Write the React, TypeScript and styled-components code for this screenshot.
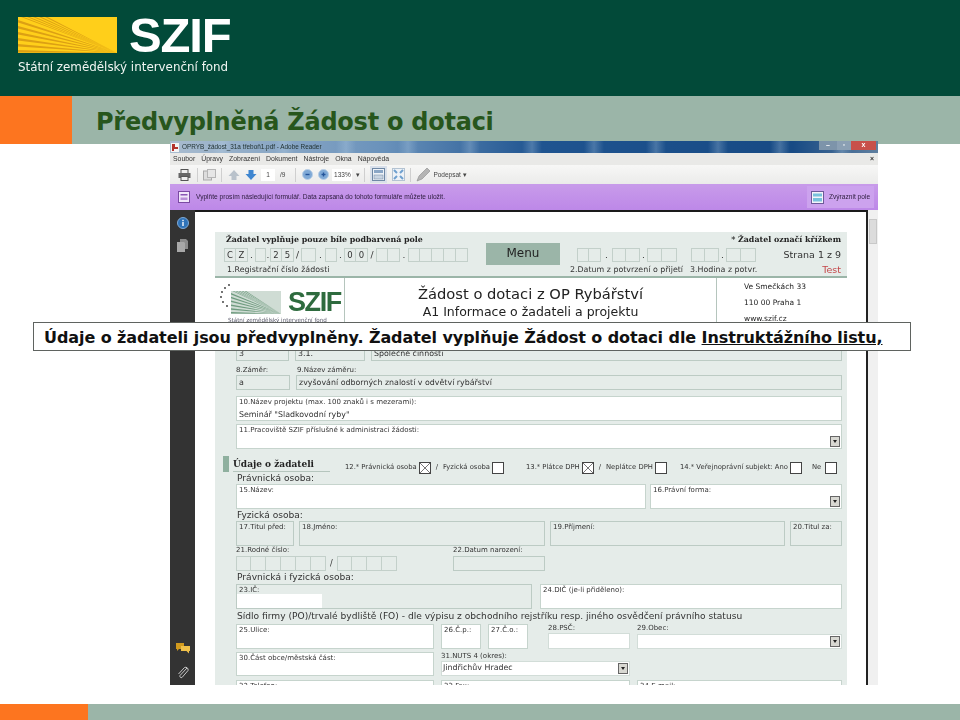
import React from "react";
import styled, { createGlobalStyle } from "styled-components";

const GlobalStyle = createGlobalStyle`
  html, body { margin: 0; padding: 0; background: #fff; }
  body { font-family: "DejaVu Sans", sans-serif; }
`;

const Page = styled.div`
  position: relative;
  width: 960px;
  height: 720px;
  display: flex;
  flex-direction: column;
  overflow: hidden;
  background: #fff;
`;

const Header = styled.header`
  height: 96px;
  flex: none;
  background: #024a39;
  padding: 17px 0 0 18px;
  box-sizing: border-box;
`;

const BrandRow = styled.div`
  display: flex;
  align-items: flex-start;
  gap: 12px;
  height: 36px;
`;

const BrandName = styled.div`
  font: 700 49px/36px "Liberation Sans", sans-serif;
  letter-spacing: -1.2px;
  color: #fff;
  height: 36px;
  overflow: visible;
`;

const BrandSub = styled.div`
  margin-top: 6px;
  font: 400 11.9px/16px "DejaVu Sans", sans-serif;
  color: #f0f5f2;
  filter: blur(0.3px);
`;

const TitleBand = styled.div`
  height: 48px;
  flex: none;
  display: flex;
  background: #9bb5a8;
`;

const OrangeBlock = styled.div<{ $w: number }>`
  width: ${(p) => p.$w}px;
  background: #fd751f;
`;

const Title = styled.h1`
  margin: 0 0 0 24px;
  font: 700 24px/53px "DejaVu Sans", sans-serif;
  letter-spacing: -0.25px;
  color: #27561c;
  white-space: nowrap;
`;

const Stage = styled.main`
  flex: 1;
  padding-left: 170px;
`;

const Window = styled.div`
  width: 708px;
  height: 544px;
  margin-top: -3px;
  display: flex;
  flex-direction: column;
  overflow: hidden;
  background: #f1f1f0;
  filter: blur(0.35px);
`;

const WinTitle = styled.div`
  height: 12px;
  flex: none;
  display: flex;
  align-items: center;
  background:
    repeating-linear-gradient(90deg, transparent 0 42px, rgba(190, 215, 235, 0.28) 52px, transparent 62px),
    linear-gradient(90deg, #a9bccf, #6a92bb 30%, #1f5490 52%, #174a84 88%, #5f7f9f);
  font: 400 6.4px/12px "Liberation Sans", sans-serif;
  color: #233;
`;

const WinText = styled.span`
  margin-left: 3px;
  white-space: nowrap;
`;

const WinButtons = styled.div`
  margin-left: auto;
  display: flex;
  height: 9px;
  align-self: flex-start;
  margin-right: 2px;
`;

const WinBtn = styled.div<{ $w: number; $c: string }>`
  width: ${(p) => p.$w}px;
  background: ${(p) => p.$c};
  color: #fff;
  font: 700 7px/8px "Liberation Sans", sans-serif;
  text-align: center;
`;

const MenuBar = styled.div`
  height: 12px;
  flex: none;
  display: flex;
  align-items: center;
  gap: 6px;
  padding: 0 4px 0 3px;
  background: #e9e9e7;
  font: 400 6.9px/12px "Liberation Sans", sans-serif;
  color: #333;
`;

const MenuClose = styled.span`
  margin-left: auto;
  font-weight: 700;
`;

const ToolBar = styled.div`
  height: 19px;
  flex: none;
  display: flex;
  align-items: center;
  padding-left: 8px;
  background: linear-gradient(#f7f7f6, #ebebea);
  font: 400 6.5px/12px "Liberation Sans", sans-serif;
  color: #444;
`;

const ToolSlot = styled.div<{ $ml?: number }>`
  margin-left: ${(p) => p.$ml ?? 0}px;
  display: flex;
  align-items: center;
`;

const ToolInput = styled.div<{ $w: number }>`
  width: ${(p) => p.$w}px;
  height: 12px;
  background: #fff;
  text-align: center;
  font-size: 6.5px;
`;

const ToolSep = styled.div<{ $ml: number }>`
  width: 1px;
  height: 14px;
  margin-left: ${(p) => p.$ml}px;
  background: #cfcfcf;
`;

const Highlight = styled.div`
  margin-left: 5px;
  padding: 2px;
  background: #d9e0ea;
  display: flex;
`;

const NoticeBar = styled.div`
  height: 26px;
  flex: none;
  display: flex;
  align-items: center;
  padding: 0 4px 0 8px;
  box-sizing: border-box;
  background: linear-gradient(#c89bea, #bd88e8);
  font: 400 6.6px/12px "Liberation Sans", sans-serif;
  color: #2c1c3d;
`;

const NoticeText = styled.span`
  margin-left: 6px;
`;

const HighlightBtn = styled.div`
  margin-left: auto;
  width: 67px;
  height: 22px;
  box-sizing: border-box;
  padding-left: 4px;
  display: flex;
  align-items: center;
  gap: 5px;
  background: #cca2ee;
  white-space: nowrap;
`;

const Body = styled.div`
  flex: 1;
  display: flex;
  min-height: 0;
`;

const SidePanel = styled.aside`
  width: 25px;
  flex: none;
  display: flex;
  flex-direction: column;
  align-items: center;
  box-sizing: border-box;
  padding: 7px 0 6px;
  background: #333;
`;

const SideGap = styled.div<{ $h: number }>`
  height: ${(p) => p.$h}px;
  flex: none;
`;

const SideSpacer = styled.div`
  flex: 1;
`;

const PageView = styled.div`
  width: 673px;
  flex: none;
  box-sizing: border-box;
  padding: 20px 0 0 20px;
  background: #fff;
  border-top: 2px solid #1a1a1a;
  border-right: 2px solid #222;
  overflow: hidden;
`;

const ScrollBar = styled.div`
  flex: 1;
  padding-top: 9px;
  display: flex;
  flex-direction: column;
  align-items: center;
  background: #f0f0f0;
`;

const ScrollThumb = styled.div`
  width: 8px;
  height: 25px;
  background: #dcdcdc;
  border: 1px solid #c8c8c8;
  box-sizing: border-box;
`;

const Form = styled.div`
  width: 632px;
  display: flex;
  flex-direction: column;
  background: #e5ece9;
  color: #333;
`;

const FormTop = styled.div`
  height: 46px;
  flex: none;
  box-sizing: border-box;
  padding-left: 9px;
  padding-right: 6px;
  display: grid;
  grid-template-columns: 262px 74px 1fr;
  border-bottom: 2px solid #9bb5a8;
`;

const TopStack = styled.div`
  display: flex;
  flex-direction: column;
  font: 400 7.9px/10px "DejaVu Sans", sans-serif;
`;

const TopRow = styled.div<{ $h: number; $pl?: number }>`
  height: ${(p) => p.$h}px;
  padding-left: ${(p) => p.$pl ?? 0}px;
  display: flex;
  align-items: center;
  white-space: nowrap;
`;

const StrongNote = styled.b<{ $right?: boolean }>`
  font: 700 7.9px/10px "DejaVu Serif", "DejaVu Sans", serif;
  color: #222;
  margin-left: ${(p) => (p.$right ? "auto" : "0")};
`;

const MenuButton = styled.div`
  height: 22px;
  margin-top: 11px;
  background: #9bb5a8;
  text-align: center;
  font: 400 12px/21px "DejaVu Sans", sans-serif;
  color: #222;
`;

const TopRight = styled(TopStack)`
  margin-left: 10px;
`;

const CellGroup = styled.div`
  display: flex;
`;

const Cell = styled.div<{ $w?: number; $h?: number }>`
  width: ${(p) => p.$w ?? 12}px;
  height: ${(p) => p.$h ?? 14}px;
  box-sizing: border-box;
  border: 1px solid #c3d0ca;
  text-align: center;
  font: 400 8.5px/12px "DejaVu Sans", sans-serif;
  & + & {
    border-left: 0;
  }
`;

const Dot = styled.span<{ $w?: number }>`
  width: ${(p) => p.$w ?? 8}px;
  text-align: center;
  font-size: 9px;
`;

const PageNo = styled.span`
  margin-left: auto;
  font-size: 9.5px;
`;

const TestNote = styled.span`
  margin-left: auto;
  font-size: 9.5px;
  color: #c4474a;
`;

const LogoRow = styled.div`
  height: 62px;
  flex: none;
  display: grid;
  grid-template-columns: 130px 1fr 131px;
  background: #fff;
`;

const LogoCell = styled.div`
  box-sizing: border-box;
  padding: 5px 0 0 5px;
  border-right: 1px solid #b5c5bd;
`;

const SmallLogo = styled.div`
  display: flex;
  align-items: flex-start;
`;

const SmallRays = styled.div`
  margin-top: 8px;
  display: flex;
`;

const SmallName = styled.div`
  margin: 8px 0 0 7px;
  font: 700 27px/23px "Liberation Sans", sans-serif;
  letter-spacing: -1.4px;
  color: #2e6b3e;
`;

const SmallSub = styled.div`
  margin: 2px 0 0 8px;
  font: 400 5.6px/8px "DejaVu Sans", sans-serif;
  color: #556;
  white-space: nowrap;
`;

const HeadCell = styled.div`
  display: flex;
  flex-direction: column;
  align-items: center;
  padding-top: 7px;
  color: #222;
`;

const HeadMain = styled.div`
  font: 400 14.7px/18px "DejaVu Sans", sans-serif;
`;

const HeadSub = styled.div`
  font: 400 12.5px/18px "DejaVu Sans", sans-serif;
`;

const AddressCell = styled.div`
  box-sizing: border-box;
  padding: 1px 0 0 27px;
  border-left: 1px solid #b5c5bd;
  font: 400 7.5px/16px "DejaVu Sans", sans-serif;
  color: #222;
`;

const FormBody = styled.div`
  display: flex;
  flex-direction: column;
  padding: 4px 5px 0 21px;
`;

const FieldRow = styled.div<{ $cols: string; $h: number; $gap?: number; $mt?: number; $end?: boolean }>`
  display: grid;
  grid-template-columns: ${(p) => p.$cols};
  column-gap: ${(p) => p.$gap ?? 6}px;
  height: ${(p) => p.$h}px;
  flex: none;
  margin-top: ${(p) => p.$mt ?? 0}px;
  align-items: ${(p) => (p.$end ? "end" : "stretch")};
`;

const Field = styled.div<{ $white?: boolean }>`
  position: relative;
  box-sizing: border-box;
  min-width: 0;
  padding: 1px 2px;
  border: 1px solid ${(p) => (p.$white ? "#c6d4cd" : "#bccbc4")};
  background: ${(p) => (p.$white ? "#fff" : "#e5ece9")};
  overflow: hidden;
`;

const BareField = styled.div<{ $ml?: number }>`
  position: relative;
  min-width: 0;
  display: flex;
  flex-direction: column;
  margin-left: ${(p) => p.$ml ?? 0}px;
`;

const Label = styled.div`
  font: 400 7px/9px "DejaVu Sans", sans-serif;
  color: #333;
  white-space: nowrap;
`;

const Value = styled.div<{ $pt?: number }>`
  padding-top: ${(p) => p.$pt ?? 0}px;
  font: 400 7.9px/11px "DejaVu Sans", sans-serif;
  color: #333;
  white-space: nowrap;
`;

const InnerInput = styled.div<{ $h: number }>`
  position: relative;
  height: ${(p) => p.$h}px;
  margin-top: auto;
  box-sizing: border-box;
  padding-left: 1px;
  border: 1px solid #d2ddd8;
  background: #fff;
`;

const WhitePatch = styled.div`
  position: absolute;
  left: 0;
  bottom: 0;
  width: 85px;
  height: 14px;
  background: #fff;
`;

const DropButton = styled.div`
  position: absolute;
  right: 1px;
  bottom: 1px;
  width: 10px;
  height: 11px;
  box-sizing: border-box;
  border: 1px solid #666;
  background: #d8d8d2;
  display: flex;
  align-items: center;
  justify-content: center;
  &::after {
    content: "";
    border-left: 2px solid transparent;
    border-right: 2px solid transparent;
    border-top: 3px solid #222;
  }
`;

const SectionRow = styled.div`
  height: 24px;
  flex: none;
  margin-left: -13px;
  display: flex;
  align-items: flex-start;
  padding-top: 7px;
  box-sizing: border-box;
`;

const Marker = styled.div`
  width: 6px;
  height: 16px;
  background: #8fb09f;
  flex: none;
`;

const SectionHead = styled.div`
  width: 97px;
  margin-left: 4px;
  height: 15px;
  border-bottom: 1px solid #b5c5bd;
  font: 700 9px/17px "DejaVu Serif", "DejaVu Sans", serif;
  color: #222;
  white-space: nowrap;
`;

const Checks = styled.div`
  margin: 5px 0 0 15px;
  flex: 1;
  display: grid;
  grid-template-columns: 181px 154px 1fr;
`;

const CheckGroup = styled.div`
  display: flex;
  align-items: center;
  height: 13px;
  font: 400 6.8px/13px "DejaVu Sans", sans-serif;
  white-space: nowrap;
`;

const CheckBox = styled.div<{ $ml: number }>`
  width: 12px;
  height: 12px;
  flex: none;
  margin-left: ${(p) => p.$ml}px;
  box-sizing: border-box;
  border: 1px solid #444;
  background: #fff;
  display: flex;
`;

const NoLabel = styled.span`
  margin-left: 10px;
`;

const Slash = styled.span`
  margin: 0 5px 0 5px;
`;

const GroupTitle = styled.div<{ $h: number }>`
  height: ${(p) => p.$h}px;
  flex: none;
  padding-left: 1px;
  font: 400 9.1px/${(p) => p.$h}px "DejaVu Sans", sans-serif;
  color: #333;
  white-space: nowrap;
`;

const BirthRow = styled.div`
  display: flex;
  align-items: center;
  gap: 4px;
  font: 400 8px/12px "DejaVu Sans", sans-serif;
`;

const Caption = styled.div`
  position: absolute;
  left: 33px;
  top: 322px;
  width: 878px;
  height: 29px;
  box-sizing: border-box;
  padding-left: 10px;
  background: #fff;
  border: 1px solid #5f6360;
  font: 700 16px/30px "DejaVu Sans", sans-serif;
  letter-spacing: -0.08px;
  color: #111;
  white-space: nowrap;
`;

const CaptionLink = styled.span`
  text-decoration: underline;
`;

const Footer = styled.footer`
  height: 16px;
  flex: none;
  display: flex;
  background: #9bb5a8;
`;

const topRays = [3, 9, 15, 21, 27];
const leftRays = [3, 9, 15, 21, 27, 33];
const stars = [
  [9, 2],
  [5, 5],
  [2, 9],
  [1, 14],
  [3, 19],
  [7, 23],
];

const FieldRays = ({ w, h, ray, bg }: { w: number; h: number; ray: string; bg: string }) => (
  <svg width={w} height={h} viewBox="0 0 99 36" preserveAspectRatio="none">
    <rect width="99" height="36" fill={bg} />
    {topRays.map((x) => (
      <polygon key={x} points={`99,36 ${x},0 ${x + 2.6},0`} fill={ray} />
    ))}
    {leftRays.map((y) => (
      <polygon key={y} points={`99,36 0,${y} 0,${y + 2.4}`} fill={ray} />
    ))}
  </svg>
);

const Stars = () => (
  <svg width="11" height="26" viewBox="0 0 11 26">
    {stars.map(([cx, cy]) => (
      <circle key={cy} cx={cx} cy={cy} r="0.9" fill="#333" />
    ))}
  </svg>
);

const PrinterIcon = () => (
  <svg width="13" height="12" viewBox="0 0 13 12">
    <rect x="3" y="0.5" width="7" height="4" fill="#eee" stroke="#555" />
    <rect x="0.5" y="4" width="12" height="5" fill="#666" />
    <rect x="3" y="7.5" width="7" height="4" fill="#eee" stroke="#555" />
  </svg>
);

const MailIcon = () => (
  <svg width="13" height="12" viewBox="0 0 13 12">
    <rect x="0.5" y="2" width="8" height="9" fill="#ddd" stroke="#aaa" />
    <rect x="4.5" y="0.5" width="8" height="8" fill="#e6e6e6" stroke="#b5b5b5" />
  </svg>
);

const ArrowIcon = ({ up, c }: { up?: boolean; c: string }) => (
  <svg width="12" height="12" viewBox="0 0 12 12">
    <path d={up ? "M6 1 L11.5 7 H8.5 V11 H3.5 V7 H0.5 Z" : "M6 11 L11.5 5 H8.5 V1 H3.5 V5 H0.5 Z"} fill={c} />
  </svg>
);

const ZoomIcon = ({ plus }: { plus?: boolean }) => (
  <svg width="11" height="11" viewBox="0 0 11 11">
    <circle cx="5.5" cy="5.5" r="5" fill="#7fa9d6" stroke="#b9cfe6" />
    <rect x="3.5" y="4.8" width="4" height="1.4" fill="#24549a" />
    {plus && <rect x="4.8" y="3.5" width="1.4" height="4" fill="#24549a" />}
  </svg>
);

const SaveIcon = () => (
  <svg width="13" height="13" viewBox="0 0 13 13">
    <rect x="0.5" y="0.5" width="12" height="12" fill="#eef2f7" stroke="#6f88a5" />
    <rect x="2" y="2" width="9" height="3" fill="#8aa6c6" />
    <rect x="2" y="7" width="9" height="4" fill="#c8d4e2" stroke="#7088a2" strokeWidth="0.5" />
  </svg>
);

const FitIcon = () => (
  <svg width="13" height="13" viewBox="0 0 13 13">
    <rect x="0.5" y="0.5" width="12" height="12" fill="#eef2f7" stroke="#b4c3d2" />
    <path d="M2 2 L5 5 M11 2 L8 5 M2 11 L5 8 M11 11 L8 8" stroke="#6fa0cf" strokeWidth="2" />
  </svg>
);

const PenIcon = () => (
  <svg width="15" height="15" viewBox="0 0 15 15">
    <path d="M1 14 L3 9 L11 1 L14 4 L6 12 Z" fill="#b4b4b4" stroke="#8a8a8a" strokeWidth="0.6" />
  </svg>
);

const FormIcon = () => (
  <svg width="12" height="12" viewBox="0 0 12 12">
    <rect x="0.5" y="0.5" width="11" height="11" fill="#f1e6fa" stroke="#7b4aa3" />
    <rect x="2.5" y="3" width="7" height="1.5" fill="#8a55b5" />
    <rect x="2.5" y="6.5" width="7" height="2.5" fill="#b98fd8" />
  </svg>
);

const HighlightIcon = () => (
  <svg width="13" height="13" viewBox="0 0 13 13">
    <rect x="0.5" y="0.5" width="12" height="12" fill="#f4f4fb" stroke="#6d5a99" />
    <rect x="2" y="2.5" width="9" height="3" fill="#78c2dc" />
    <rect x="2" y="7" width="9" height="3.5" fill="#78c2dc" />
  </svg>
);

const InfoIcon = () => (
  <svg width="12" height="12" viewBox="0 0 12 12">
    <circle cx="6" cy="6" r="5.5" fill="#2f73b8" stroke="#7fa9d6" />
    <rect x="5.2" y="5" width="1.6" height="4" fill="#dfe9f4" />
    <rect x="5.2" y="2.8" width="1.6" height="1.4" fill="#dfe9f4" />
  </svg>
);

const PagesIcon = () => (
  <svg width="11" height="13" viewBox="0 0 11 13">
    <path d="M3 0 H9 L11 2 V10 H3 Z" fill="#8c8c8c" />
    <path d="M0 3 H7 L8 4 V13 H0 Z" fill="#a8a8a8" />
  </svg>
);

const ChatIcon = () => (
  <svg width="14" height="11" viewBox="0 0 14 11">
    <path d="M0 0 H8 V6 H3 L1 8 V6 H0 Z" fill="#d19a1e" />
    <path d="M5 3 H14 V8 H13 V10.5 L10.5 8 H5 Z" fill="#efc04a" />
  </svg>
);

const ClipIcon = () => (
  <svg width="12" height="13" viewBox="0 0 12 13" fill="none" stroke="#c9c9c9" strokeWidth="1">
    <path d="M10 2 L3 9.5 A1.5 1.5 0 0 0 5 11.5 L11 4.5 A2.5 2.5 0 0 0 7.5 1.5 L1.5 8" />
  </svg>
);

const CrossMark = () => (
  <svg width="10" height="10" viewBox="0 0 10 10">
    <path d="M0 0 L10 10 M10 0 L0 10" stroke="#555" strokeWidth="0.8" />
  </svg>
);

const PdfIcon = () => (
  <svg width="8" height="9" viewBox="0 0 8 9">
    <rect width="8" height="9" fill="#f4f4f4" />
    <path d="M1 1 H4 V4 H7 V6 H3 V8 H1 Z" fill="#b3332d" />
  </svg>
);

const cells = (n: number, w?: number, h?: number, text: string[] = []) => (
  <CellGroup>
    {Array.from({ length: n }).map((_, i) => (
      <Cell key={i} $w={w} $h={h}>
        {text[i]}
      </Cell>
    ))}
  </CellGroup>
);

const menuItems = ["Soubor", "Úpravy", "Zobrazení", "Dokument", "Nástroje", "Okna", "Nápověda"];

const App = () => {
  return (
    <Page>
      <GlobalStyle />
      <Header>
        <BrandRow>
          <FieldRays w={99} h={36} ray="#dca014" bg="#ffcf1a" />
          <BrandName>SZIF</BrandName>
        </BrandRow>
        <BrandSub>Státní zemědělský intervenční fond</BrandSub>
      </Header>
      <TitleBand>
        <OrangeBlock $w={72} />
        <Title>Předvyplněná Žádost o dotaci</Title>
      </TitleBand>

      <Stage>
        <Window>
          <WinTitle>
            <ToolSlot $ml={1}>
              <PdfIcon />
            </ToolSlot>
            <WinText>OPRYB_žádost_31a třeboň1.pdf - Adobe Reader</WinText>
            <WinButtons>
              <WinBtn $w={18} $c="#7d94aa">–</WinBtn>
              <WinBtn $w={14} $c="#8ba0b4">▫</WinBtn>
              <WinBtn $w={25} $c="#c8504a">x</WinBtn>
            </WinButtons>
          </WinTitle>
          <MenuBar>
            {menuItems.map((item) => (
              <span key={item}>{item}</span>
            ))}
            <MenuClose>×</MenuClose>
          </MenuBar>
          <ToolBar>
            <PrinterIcon />
            <ToolSep $ml={6} />
            <ToolSlot $ml={5}>
              <MailIcon />
            </ToolSlot>
            <ToolSep $ml={5} />
            <ToolSlot $ml={6}>
              <ArrowIcon up c="#b9c2cb" />
            </ToolSlot>
            <ToolSlot $ml={5}>
              <ArrowIcon c="#3f86d0" />
            </ToolSlot>
            <ToolSlot $ml={4}>
              <ToolInput $w={14}>1</ToolInput>
            </ToolSlot>
            <ToolSlot $ml={5}>/9</ToolSlot>
            <ToolSep $ml={10} />
            <ToolSlot $ml={6}>
              <ZoomIcon />
            </ToolSlot>
            <ToolSlot $ml={5}>
              <ZoomIcon plus />
            </ToolSlot>
            <ToolSlot $ml={3}>
              <ToolInput $w={20}>133%</ToolInput>
            </ToolSlot>
            <ToolSlot $ml={4}>▾</ToolSlot>
            <ToolSep $ml={4} />
            <Highlight>
              <SaveIcon />
            </Highlight>
            <ToolSlot $ml={5}>
              <FitIcon />
            </ToolSlot>
            <ToolSep $ml={5} />
            <ToolSlot $ml={5}>
              <PenIcon />
            </ToolSlot>
            <ToolSlot $ml={2}>Podepsat ▾</ToolSlot>
          </ToolBar>
          <NoticeBar>
            <FormIcon />
            <NoticeText>Vyplňte prosím následující formulář. Data zapsaná do tohoto formuláře můžete uložit.</NoticeText>
            <HighlightBtn>
              <HighlightIcon />
              Zvýraznit pole
            </HighlightBtn>
          </NoticeBar>

          <Body>
            <SidePanel>
              <InfoIcon />
              <SideGap $h={10} />
              <PagesIcon />
              <SideSpacer />
              <ChatIcon />
              <SideGap $h={12} />
              <ClipIcon />
            </SidePanel>
            <PageView>
              <Form>
                <FormTop>
                  <TopStack>
                    <TopRow $h={15} $pl={2}>
                      <StrongNote>Žadatel vyplňuje pouze bíle podbarvená pole</StrongNote>
                    </TopRow>
                    <TopRow $h={16}>
                      {cells(2, 12, 14, ["C", "Z"])}
                      <Dot $w={7}>.</Dot>
                      {cells(1, 11)}
                      <Dot $w={4}>.</Dot>
                      {cells(2, 12, 14, ["2", "5"])}
                      <Dot $w={7}>/</Dot>
                      {cells(1, 15)}
                      <Dot $w={9}>.</Dot>
                      {cells(1, 12)}
                      <Dot $w={7}>.</Dot>
                      {cells(2, 12, 14, ["0", "0"])}
                      <Dot>/</Dot>
                      {cells(2, 12)}
                      <Dot $w={8}>.</Dot>
                      {cells(5, 12)}
                    </TopRow>
                    <TopRow $h={13} $pl={3}>1.Registrační číslo žádosti</TopRow>
                  </TopStack>
                  <MenuButton>Menu</MenuButton>
                  <TopRight>
                    <TopRow $h={15}>
                      <StrongNote $right>* Žadatel označí křížkem</StrongNote>
                    </TopRow>
                    <TopRow $h={16} $pl={7}>
                      {cells(2, 12)}
                      <Dot $w={11}>.</Dot>
                      {cells(2, 14)}
                      <Dot $w={7}>.</Dot>
                      {cells(2, 15)}
                      <Dot $w={14} />
                      {cells(2, 14)}
                      <Dot $w={7}>.</Dot>
                      {cells(2, 15)}
                      <PageNo>Strana 1 z 9</PageNo>
                    </TopRow>
                    <TopRow $h={13}>
                      2.Datum z potvrzení o přijetí
                      <Dot $w={7} />
                      3.Hodina z potvr.
                      <TestNote>Test</TestNote>
                    </TopRow>
                  </TopRight>
                </FormTop>

                <LogoRow>
                  <LogoCell>
                    <SmallLogo>
                      <Stars />
                      <SmallRays>
                        <FieldRays w={50} h={23} ray="#6f9b7f" bg="#cfdcd4" />
                      </SmallRays>
                      <SmallName>SZIF</SmallName>
                    </SmallLogo>
                    <SmallSub>Státní zemědělský intervenční fond</SmallSub>
                  </LogoCell>
                  <HeadCell>
                    <HeadMain>Žádost o dotaci z OP Rybářství</HeadMain>
                    <HeadSub>A1 Informace o žadateli a projektu</HeadSub>
                  </HeadCell>
                  <AddressCell>
                    Ve Smečkách 33
                    <br />
                    110 00 Praha 1
                    <br />
                    www.szif.cz
                  </AddressCell>
                </LogoRow>

                <FormBody>
                  <FieldRow $cols="53px 70px 1fr" $h={17}>
                    <Field>
                      <Value $pt={2}>3</Value>
                    </Field>
                    <Field>
                      <Value $pt={2}>3.1.</Value>
                    </Field>
                    <Field>
                      <Value $pt={2}>Společné činnosti</Value>
                    </Field>
                  </FieldRow>
                  <FieldRow $cols="61px 1fr" $gap={0} $h={14} $end>
                    <Label>8.Záměr:</Label>
                    <Label>9.Název záměru:</Label>
                  </FieldRow>
                  <FieldRow $cols="54px 1fr" $h={15}>
                    <Field>
                      <Value>a</Value>
                    </Field>
                    <Field>
                      <Value>zvyšování odborných znalostí v odvětví rybářství</Value>
                    </Field>
                  </FieldRow>
                  <FieldRow $cols="1fr" $h={25} $mt={6}>
                    <Field $white>
                      <Label>10.Název projektu (max. 100 znaků i s mezerami):</Label>
                      <Value $pt={2}>Seminář "Sladkovodní ryby"</Value>
                    </Field>
                  </FieldRow>
                  <FieldRow $cols="1fr" $h={25} $mt={3}>
                    <Field $white>
                      <Label>11.Pracoviště SZIF příslušné k administraci žádosti:</Label>
                      <DropButton />
                    </Field>
                  </FieldRow>

                  <SectionRow>
                    <Marker />
                    <SectionHead>Údaje o žadateli</SectionHead>
                    <Checks>
                      <CheckGroup>
                        12.* Právnická osoba
                        <CheckBox $ml={2}>
                          <CrossMark />
                        </CheckBox>
                        <Slash>/</Slash>
                        Fyzická osoba
                        <CheckBox $ml={2} />
                      </CheckGroup>
                      <CheckGroup>
                        13.* Plátce DPH
                        <CheckBox $ml={2}>
                          <CrossMark />
                        </CheckBox>
                        <Slash>/</Slash>
                        Neplátce DPH
                        <CheckBox $ml={2} />
                      </CheckGroup>
                      <CheckGroup>
                        14.* Veřejnoprávní subjekt: Ano
                        <CheckBox $ml={2} />
                        <NoLabel>Ne</NoLabel>
                        <CheckBox $ml={4} />
                      </CheckGroup>
                    </Checks>
                  </SectionRow>

                  <GroupTitle $h={11}>Právnická osoba:</GroupTitle>
                  <FieldRow $cols="410px 1fr" $gap={4} $h={25}>
                    <Field $white>
                      <Label>15.Název:</Label>
                    </Field>
                    <Field $white>
                      <Label>16.Právní forma:</Label>
                      <DropButton />
                    </Field>
                  </FieldRow>

                  <GroupTitle $h={12}>Fyzická osoba:</GroupTitle>
                  <FieldRow $cols="58px 246px 235px 1fr" $gap={5} $h={25}>
                    <Field>
                      <Label>17.Titul před:</Label>
                    </Field>
                    <Field>
                      <Label>18.Jméno:</Label>
                    </Field>
                    <Field>
                      <Label>19.Příjmení:</Label>
                    </Field>
                    <Field>
                      <Label>20.Titul za:</Label>
                    </Field>
                  </FieldRow>
                  <FieldRow $cols="217px 92px" $gap={0} $h={10}>
                    <Label>21.Rodné číslo:</Label>
                    <Label>22.Datum narození:</Label>
                  </FieldRow>
                  <FieldRow $cols="217px 92px" $gap={0} $h={15}>
                    <BirthRow>
                      {cells(6, 15, 15)}
                      <span>/</span>
                      {cells(4, 15, 15)}
                    </BirthRow>
                    <Field />
                  </FieldRow>

                  <GroupTitle $h={13}>Právnická i fyzická osoba:</GroupTitle>
                  <FieldRow $cols="296px 1fr" $gap={8} $h={25}>
                    <Field>
                      <Label>23.IČ:</Label>
                      <WhitePatch />
                    </Field>
                    <Field $white>
                      <Label>24.DIČ (je-li přiděleno):</Label>
                    </Field>
                  </FieldRow>

                  <GroupTitle $h={15}>
                    Sídlo firmy (PO)/trvalé bydliště (FO) - dle výpisu z obchodního rejstříku resp. jiného osvědčení právního statusu
                  </GroupTitle>
                  <FieldRow $cols="198px 40px 40px 1fr 205px" $gap={7} $h={24}>
                    <Field $white>
                      <Label>25.Ulice:</Label>
                    </Field>
                    <Field $white>
                      <Label>26.Č.p.:</Label>
                    </Field>
                    <Field $white>
                      <Label>27.Č.o.:</Label>
                    </Field>
                    <BareField $ml={13}>
                      <Label>28.PSČ:</Label>
                      <InnerInput $h={16} />
                    </BareField>
                    <BareField>
                      <Label>29.Obec:</Label>
                      <InnerInput $h={15}>
                        <DropButton />
                      </InnerInput>
                    </BareField>
                  </FieldRow>
                  <FieldRow $cols="198px 189px" $gap={7} $h={24} $mt={4}>
                    <Field $white>
                      <Label>30.Část obce/městská část:</Label>
                    </Field>
                    <BareField>
                      <Label>31.NUTS 4 (okres):</Label>
                      <InnerInput $h={15}>
                        <Value>Jindřichův Hradec</Value>
                        <DropButton />
                      </InnerInput>
                    </BareField>
                  </FieldRow>
                  <FieldRow $cols="198px 189px 1fr" $gap={7} $h={24} $mt={4}>
                    <Field $white>
                      <Label>32.Telefon:</Label>
                    </Field>
                    <Field $white>
                      <Label>33.Fax:</Label>
                    </Field>
                    <Field $white>
                      <Label>34.E-mail:</Label>
                    </Field>
                  </FieldRow>
                </FormBody>
              </Form>
            </PageView>
            <ScrollBar>
              <ScrollThumb />
            </ScrollBar>
          </Body>
        </Window>
      </Stage>

      <Footer>
        <OrangeBlock $w={88} />
      </Footer>

      <Caption>
        Údaje o žadateli jsou předvyplněny. Žadatel vyplňuje Žádost o dotaci dle <CaptionLink>Instruktážního listu,</CaptionLink>
      </Caption>
    </Page>
  );
};

export default App;
